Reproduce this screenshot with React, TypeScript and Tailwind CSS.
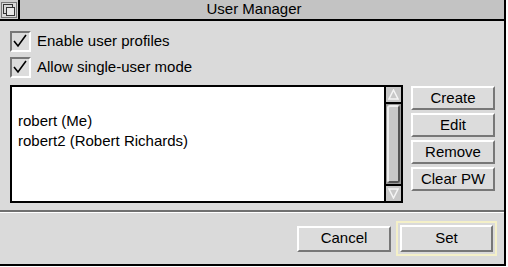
import React from "react";

const font = { fontFamily: '"Liberation Sans", Arial, sans-serif' };

function Raised({ children, className = "" }: { children?: React.ReactNode; className?: string }) {
  return (
    <div
      className={`flex items-center justify-center border-2 border-t-white border-l-white border-b-[#777] border-r-[#777] bg-[#dcdcdc] text-[15px] text-black ${className}`}
    >
      {children}
    </div>
  );
}

function Check({ label }: { label: string }) {
  return (
    <div className="flex h-[26px] items-center gap-[6px]">
      <div className="flex h-[21px] w-[21px] items-center justify-center border-2 border-t-[#777] border-l-[#777] border-b-white border-r-white bg-[#dcdcdc]">
        <svg width="15" height="14" viewBox="0 0 15 14">
          <path d="M1 7 L5 12 L13 1" fill="none" stroke="black" strokeWidth="1.6" />
        </svg>
      </div>
      <span className="text-[15px] text-black">{label}</span>
    </div>
  );
}

export default function App() {
  return (
    <div className="h-[267px] w-[508px] bg-white" style={font}>
      <div className="flex h-[266px] w-[506px] flex-col border-r-2 border-b-2 border-black bg-[#dadada]">
        <div className="flex h-[21px] border-b-2 border-black bg-[#c3c3c3]">
          <div className="flex w-[20px] items-center justify-center border-r-2 border-black bg-[#cfcfcf]">
            <svg width="16" height="16" viewBox="0 0 16 16">
              <rect x="0.5" y="0.5" width="15" height="15" fill="#d8d8d8" stroke="#777" />
              <rect x="2.5" y="2.5" width="9" height="9" fill="none" stroke="#333" />
              <rect x="5.5" y="5.5" width="8" height="8" fill="#e8e8e8" stroke="#333" />
            </svg>
          </div>
          <div className="flex flex-1 items-center justify-center pr-[16px] text-[15px] text-black">User Manager</div>
        </div>

        <div className="flex flex-col pl-[10px] pt-[7px]">
          <Check label="Enable user profiles" />
          <Check label="Allow single-user mode" />
        </div>

        <div className="mt-[5px] flex pl-[10px]">
          <div className="flex h-[118px] w-[393px] border-2 border-black bg-white">
            <div className="flex flex-1 flex-col pl-[6px] pt-[24px] text-[15px] leading-[20px] text-black">
              <span>robert (Me)</span>
              <span>robert2 (Robert Richards)</span>
            </div>
            <div className="flex w-[17px] flex-col border-l-2 border-black bg-[#999]">
              <div className="flex h-[17px] items-center justify-center border-b-2 border-black bg-[#c8c8c8]">
                <svg width="11" height="11" viewBox="0 0 11 11">
                  <path d="M5.5 1 L10 10 L1 10 Z" fill="none" stroke="#f4f4f4" strokeWidth="1.5" />
                </svg>
              </div>
              <div className="flex-1 p-[1px]">
                <div className="h-full rounded-[3px] border-2 border-t-[#eee] border-l-[#eee] border-b-[#555] border-r-[#555] bg-[#c8c8c8]" />
              </div>
              <div className="flex h-[17px] items-center justify-center border-t-2 border-black bg-[#c8c8c8]">
                <svg width="11" height="11" viewBox="0 0 11 11">
                  <path d="M1 1 L10 1 L5.5 10 Z" fill="none" stroke="#f4f4f4" strokeWidth="1.5" />
                </svg>
              </div>
            </div>
          </div>
          <div className="ml-[8px] mt-[1px] flex w-[84px] flex-col gap-[3px]">
            <Raised className="h-[24px]">Create</Raised>
            <Raised className="h-[24px]">Edit</Raised>
            <Raised className="h-[24px]">Remove</Raised>
            <Raised className="h-[24px]">Clear PW</Raised>
          </div>
        </div>

        <div className="mt-[7px] h-[3px] border-t-2 border-b border-t-[#707070] border-b-white" />

        <div className="flex flex-1 items-center justify-end gap-[5px] pr-[7px]">
          <Raised className="h-[26px] w-[94px]">Cancel</Raised>
          <div className="border-2 border-[#f4f0c8] p-[2px]">
            <Raised className="h-[27px] w-[93px]">Set</Raised>
          </div>
        </div>
      </div>
    </div>
  );
}
